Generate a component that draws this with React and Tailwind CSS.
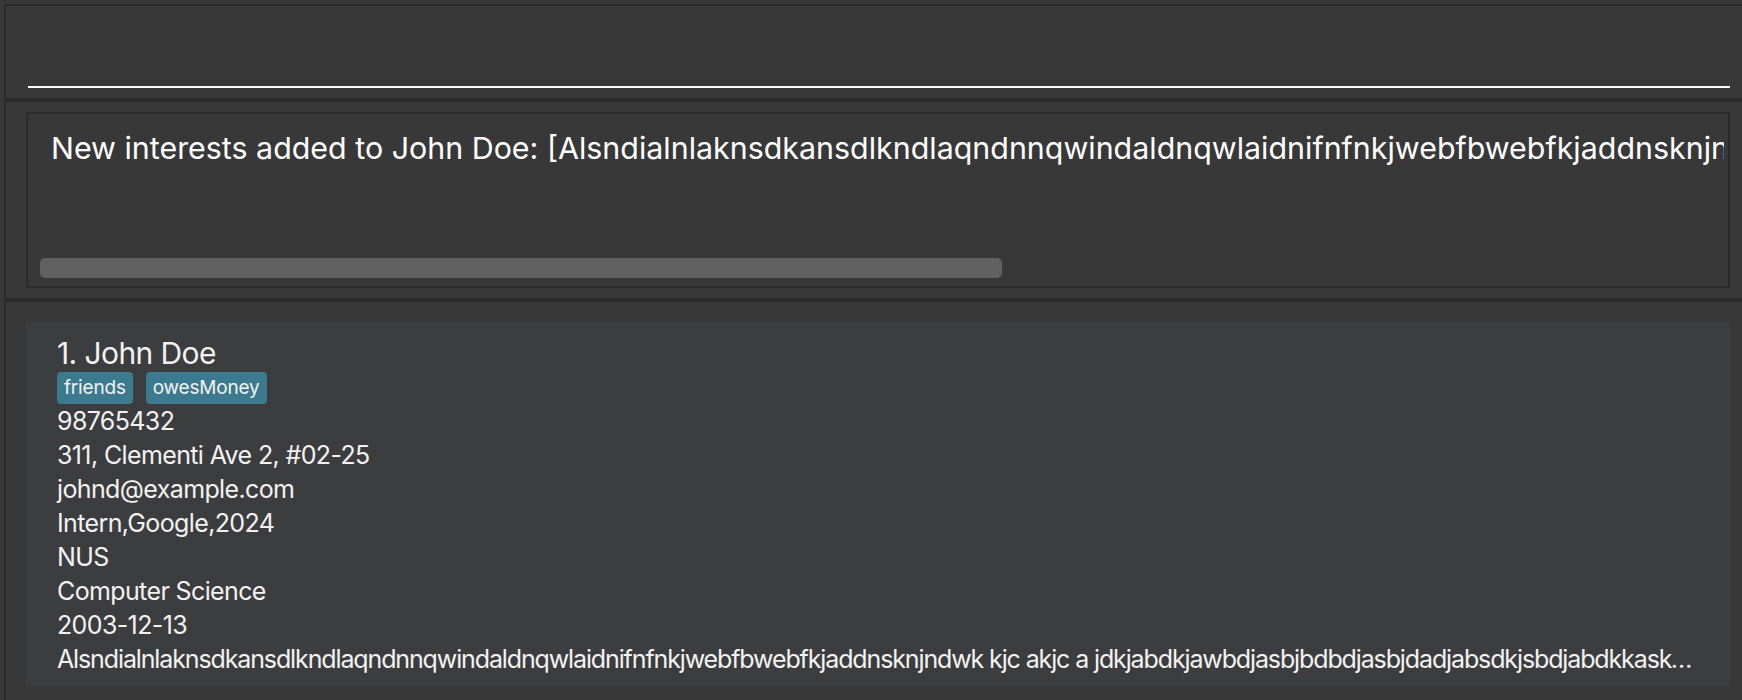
export default function App() {
  const interest =
    "Alsndialnlaknsdkansdlkndlaqndnnqwindaldnqwlaidnifnfnkjwebfbwebfkjaddnsknjndwk kjc akjc a jdkjabdkjawbdjasbjbdbdjasbjdadjabsdkjsbdjabdkkaskdjbaksjdbkajsbdkjasbdkjasbd";
  const font = { fontFamily: "Inter, 'Noto Sans', sans-serif" };
  return (
    <div
      className="w-[1742px] h-[700px] bg-[#383838] overflow-hidden pl-[4px] pt-[4px]"
      style={font}
    >
      <div className="w-[1760px] h-[720px] border-l-2 border-t-2 border-[#2b2b2b] flex flex-col">
        {/* command box */}
        <div className="h-[92px] flex flex-col justify-end pb-[10px] pl-[22px]">
          <div className="w-[1702px] h-[2px] bg-white"></div>
        </div>
        <div className="h-[4px] bg-[#2b2b2b]"></div>
        {/* result display */}
        <div className="h-[196px] py-[10px] pl-[20px]">
          <div className="w-[1704px] h-[176px] border-2 border-[#2b2b2b] flex flex-col">
            <div className="h-[144px] pt-[16px] pl-[23px] pr-[4px] overflow-hidden">
              <div className="text-[30.4px] leading-[36px] text-white whitespace-nowrap overflow-hidden">
                New interests added to John Doe: [{interest}]
              </div>
            </div>
            <div className="pl-[12px]">
              <div className="w-[962px] h-[20px] rounded-[5px] bg-[#616161]"></div>
            </div>
          </div>
        </div>
        <div className="h-[4px] bg-[#2b2b2b]"></div>
        {/* person list */}
        <div className="pt-[20px] pl-[20px]">
          <div className="w-[1704px] h-[364px] bg-[#3c3d3f] pt-[13px] pl-[31px] pr-[26px] text-[#f2f2f2]">
            <div className="text-[30px] leading-[36px] whitespace-nowrap tracking-[-0.02em]">1. John Doe</div>
            <div className="flex gap-[13px] mt-[1px] h-[32px]">
              <span className="h-[32px] px-[7px] rounded-[4px] bg-[#3c7a8f] text-[19px] leading-[32px] text-[#f2f2f2] tracking-[-0.01em]">
                friends
              </span>
              <span className="h-[32px] px-[7px] rounded-[4px] bg-[#3c7a8f] text-[19px] leading-[32px] text-[#f2f2f2] tracking-[-0.01em]">
                owesMoney
              </span>
            </div>
            <div className="text-[25px] leading-[34px] tracking-[-0.025em]">
              <div>98765432</div>
              <div>311, Clementi Ave 2, #02-25</div>
              <div>johnd@example.com</div>
              <div>Intern,Google,2024</div>
              <div>NUS</div>
              <div>Computer Science</div>
              <div>2003-12-13</div>
              <div className="whitespace-nowrap overflow-hidden text-ellipsis tracking-[-0.045em]">
                {interest}
              </div>
            </div>
          </div>
        </div>
      </div>
    </div>
  );
}
